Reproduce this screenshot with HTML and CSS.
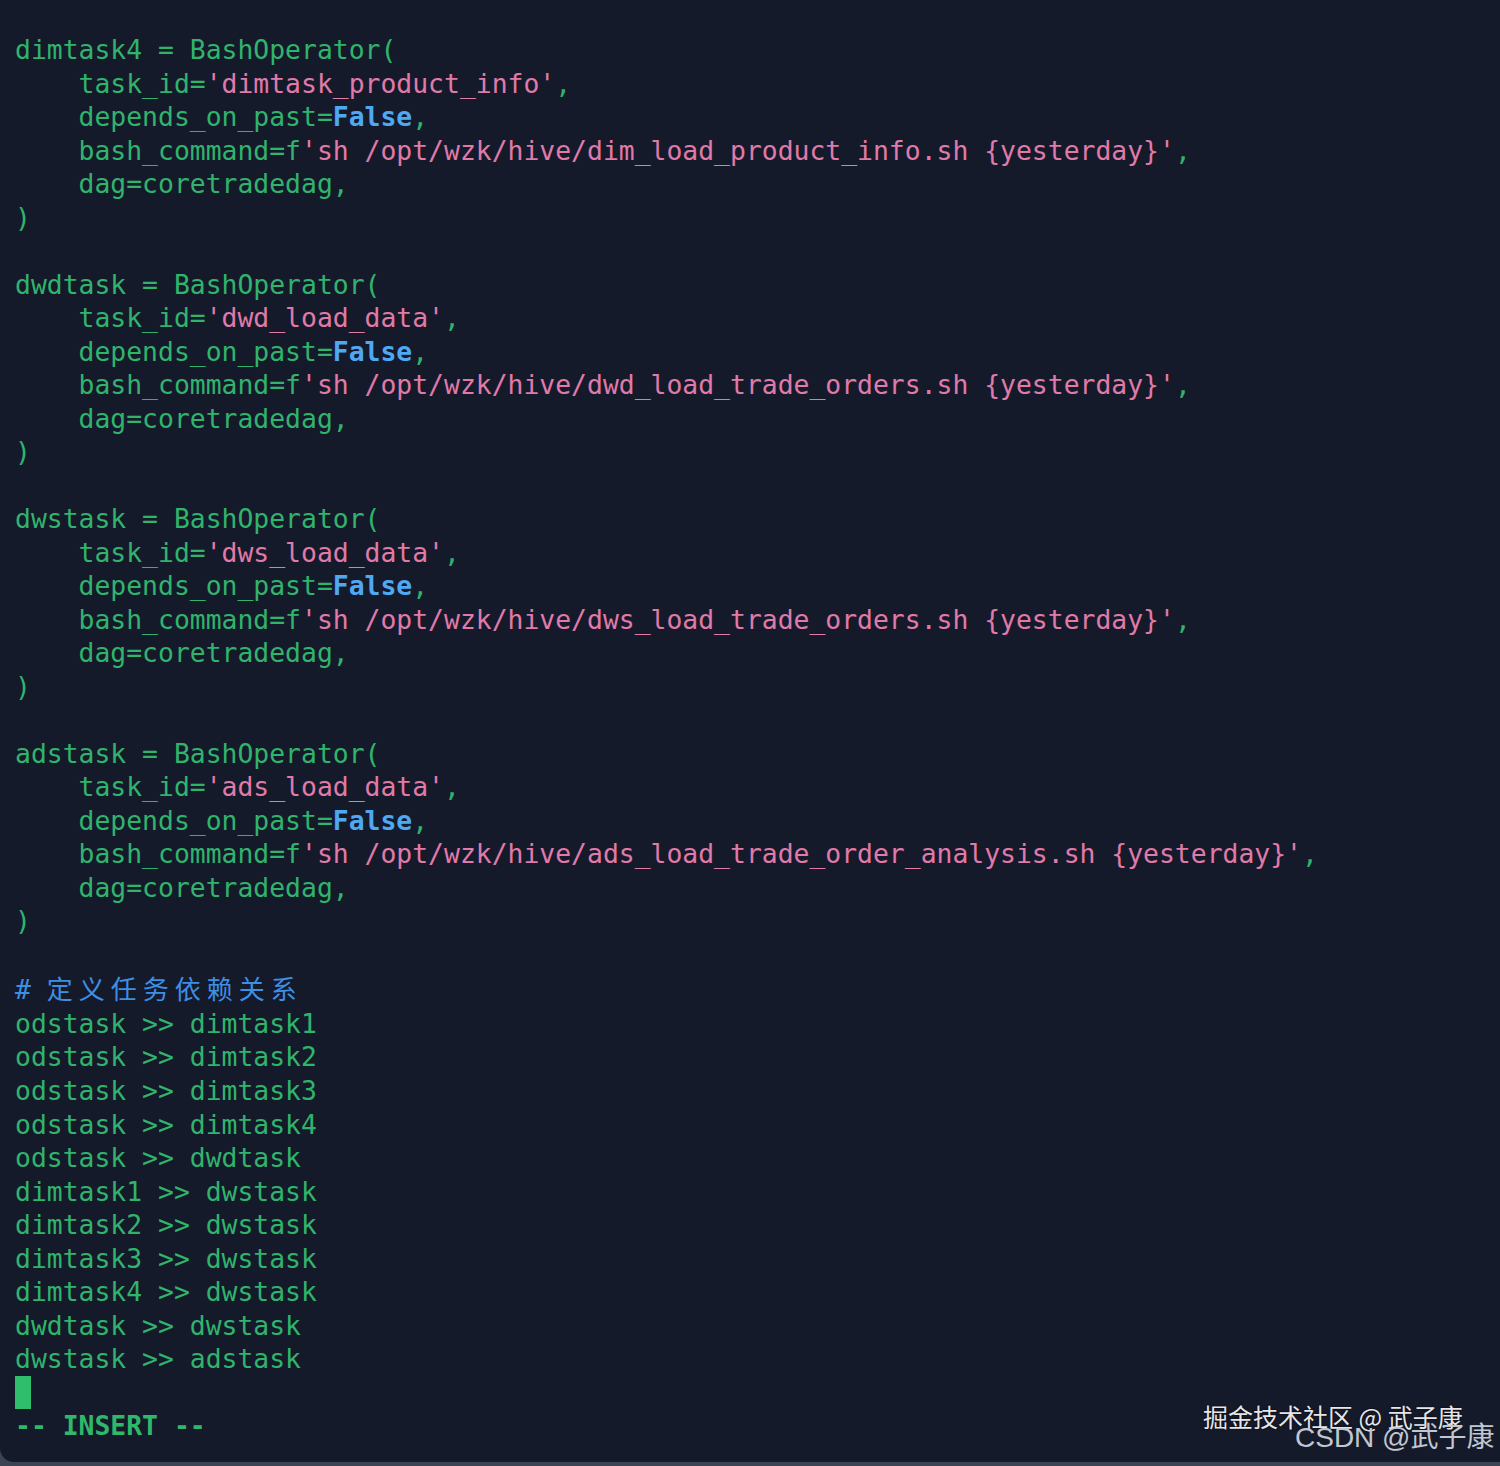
FILE: index.html
```html
<!DOCTYPE html>
<html lang="zh">
<head>
<meta charset="utf-8">
<title>vim</title>
<link rel="stylesheet" href="styles.css">
</head>
<body>
<div class="term">
<pre class="code"><span class="g">dimtask4 = BashOperator(</span>
<span class="g">    task_id=</span><span class="p">'dimtask_product_info'</span><span class="g">,</span>
<span class="g">    depends_on_past=</span><span class="b">False</span><span class="g">,</span>
<span class="g">    bash_command=f</span><span class="p">'sh /opt/wzk/hive/dim_load_product_info.sh {yesterday}'</span><span class="g">,</span>
<span class="g">    dag=coretradedag,</span>
<span class="g">)</span>

<span class="g">dwdtask = BashOperator(</span>
<span class="g">    task_id=</span><span class="p">'dwd_load_data'</span><span class="g">,</span>
<span class="g">    depends_on_past=</span><span class="b">False</span><span class="g">,</span>
<span class="g">    bash_command=f</span><span class="p">'sh /opt/wzk/hive/dwd_load_trade_orders.sh {yesterday}'</span><span class="g">,</span>
<span class="g">    dag=coretradedag,</span>
<span class="g">)</span>

<span class="g">dwstask = BashOperator(</span>
<span class="g">    task_id=</span><span class="p">'dws_load_data'</span><span class="g">,</span>
<span class="g">    depends_on_past=</span><span class="b">False</span><span class="g">,</span>
<span class="g">    bash_command=f</span><span class="p">'sh /opt/wzk/hive/dws_load_trade_orders.sh {yesterday}'</span><span class="g">,</span>
<span class="g">    dag=coretradedag,</span>
<span class="g">)</span>

<span class="g">adstask = BashOperator(</span>
<span class="g">    task_id=</span><span class="p">'ads_load_data'</span><span class="g">,</span>
<span class="g">    depends_on_past=</span><span class="b">False</span><span class="g">,</span>
<span class="g">    bash_command=f</span><span class="p">'sh /opt/wzk/hive/ads_load_trade_order_analysis.sh {yesterday}'</span><span class="g">,</span>
<span class="g">    dag=coretradedag,</span>
<span class="g">)</span>

<span class="c"># <span class="cjk">定义任务依赖关系</span></span>
<span class="g">odstask &gt;&gt; dimtask1</span>
<span class="g">odstask &gt;&gt; dimtask2</span>
<span class="g">odstask &gt;&gt; dimtask3</span>
<span class="g">odstask &gt;&gt; dimtask4</span>
<span class="g">odstask &gt;&gt; dwdtask</span>
<span class="g">dimtask1 &gt;&gt; dwstask</span>
<span class="g">dimtask2 &gt;&gt; dwstask</span>
<span class="g">dimtask3 &gt;&gt; dwstask</span>
<span class="g">dimtask4 &gt;&gt; dwstask</span>
<span class="g">dwdtask &gt;&gt; dwstask</span>
<span class="g">dwstask &gt;&gt; adstask</span>
<span class="cursor"> </span>
<span class="mode">-- INSERT --</span></pre>
<div class="wm1">掘金技术社区 @ 武子康</div>
<div class="wm2">CSDN @武子康</div>
</div>
</body>
</html>
```

FILE: styles.css
```css
html, body {
  margin: 0;
  padding: 0;
}
body {
  background: #3a4452;
  width: 1500px;
  height: 1466px;
  overflow: hidden;
}
.term {
  position: relative;
  background: #151a2b;
  height: 1462px;
  border-bottom-left-radius: 14px;
  overflow: hidden;
}
.code {
  margin: 0;
  padding: 33px 0 0 15px;
  font-family: "DejaVu Sans Mono", "Liberation Mono", monospace;
  font-size: 26.4px;
  line-height: 33.52px;
  white-space: pre;
  color: #30b46c;
}
.g { color: #30b46c; }
.p { color: #e07aa9; }
.b { color: #4ea8f2; font-weight: bold; }
.c { color: #3d8fe3; }
.cjk {
  font-family: "Noto Sans CJK SC", sans-serif;
  font-size: 26px;
  letter-spacing: 6px;
}
.cursor {
  display: inline-block;
  width: 16px;
  height: 33px;
  background: #2fbf6c;
  vertical-align: top;
}
.mode {
  font-weight: bold;
  color: #2fb86a;
}
.wm1 {
  position: absolute;
  left: 1203px;
  top: 1400px;
  font-family: "Noto Sans CJK SC", sans-serif;
  font-size: 25px;
  line-height: 32px;
  color: #e6e6e6;
  text-shadow: 0 0 2px #000;
  white-space: nowrap;
}
.wm2 {
  position: absolute;
  left: 1295px;
  top: 1420px;
  font-family: "Liberation Sans", "Noto Sans CJK SC", sans-serif;
  font-size: 28px;
  line-height: 36px;
  color: #c2c6cf;
  white-space: nowrap;
}
```
